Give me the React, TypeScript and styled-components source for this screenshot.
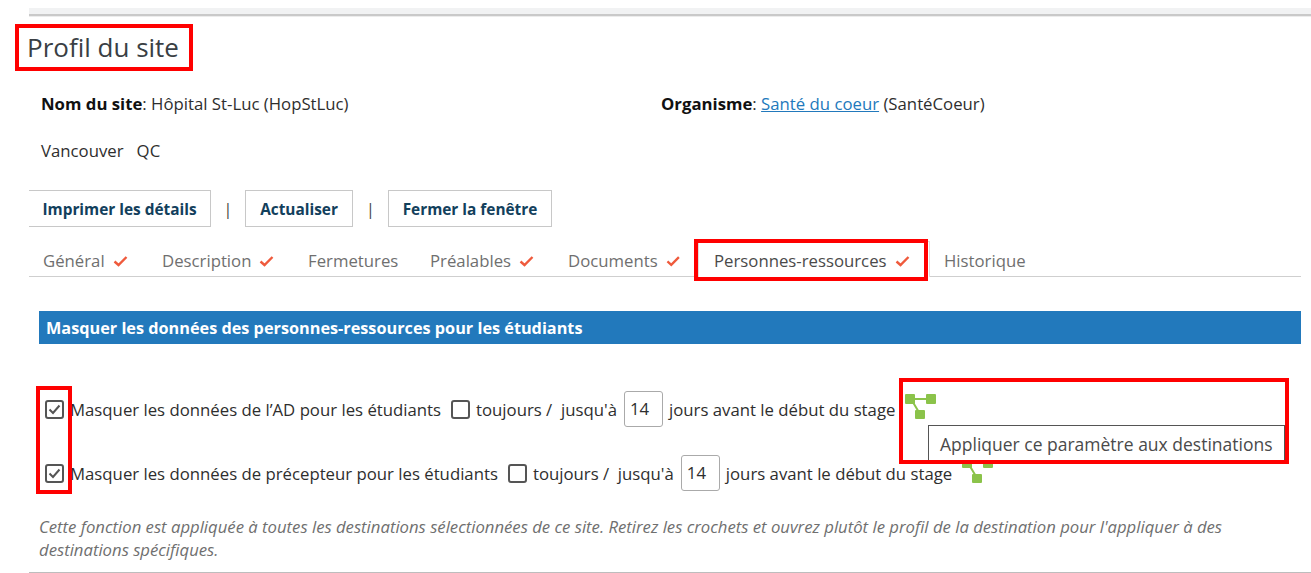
import React from "react";
import styled, { createGlobalStyle } from "styled-components";

const Global = createGlobalStyle`
  html, body { margin: 0; padding: 0; background: #fff; }
  body { font-family: "Open Sans", "Liberation Sans", sans-serif; color: #2b2b2b; }
`;

const Page = styled.div`
  position: relative;
  width: 1311px;
  height: 573px;
  overflow: hidden;
  box-sizing: border-box;
  padding: 8px 0 0 29px;
  display: flex;
  flex-direction: column;
`;
const TopBar = styled.div`
  height: 6px;
  background: #f1f2f3;
  border-bottom: 2px solid #c9c9c9;
  box-shadow: 0 1px 0 #ececec;
`;
const Title = styled.h1`
  margin: 9px 0 0 -2px;
  font-size: 26px;
  line-height: 44px;
  font-weight: 400;
  color: #3a3f44;
`;
const InfoRow = styled.div`
  display: flex;
  margin: 23px 0 0 12px;
  font-size: 16.75px;
  line-height: 24px;
  color: #2e2e2e;
`;
const InfoCell = styled.div`
  width: 620px;
  b { font-weight: 700; color: #111; }
  a { color: #2279bc; text-decoration: underline; }
`;
const City = styled.div`
  margin: 23px 0 0 12px;
  font-size: 16.75px;
  line-height: 24px;
  white-space: pre;
  color: #2e2e2e;
`;
const Actions = styled.div`
  display: flex;
  align-items: center;
  margin: 27px 0 0 0;
  height: 37px;
`;
const ActionButton = styled.button<{ $width: number; $flushLeft?: boolean }>`
  width: ${(p) => p.$width}px;
  height: 37px;
  box-sizing: border-box;
  padding: 1px 0 0 0;
  background: #fff;
  border: 1px solid #c8c8c8;
  ${(p) => (p.$flushLeft ? "border-left: 0;" : "")}
  font-family: inherit;
  font-size: 15.4px;
  font-weight: 700;
  color: #12405c;
`;
const Sep = styled.span<{ $width: number }>`
  width: ${(p) => p.$width}px;
  text-align: center;
  font-size: 16px;
  color: #444;
`;
const Tabs = styled.div`
  display: flex;
  align-items: flex-end;
  height: 37px;
  margin: 12px 10px 0 0;
  border-bottom: 1px solid #cfcfcf;
`;
const Tab = styled.div<{ $width: number }>`
  width: ${(p) => p.$width}px;
  height: 37px;
  box-sizing: border-box;
  flex: none;
  display: flex;
  align-items: center;
  gap: 8px;
  padding: 6px 0 0 14px;
  font-size: 16.75px;
  color: #6f6f6f;
  white-space: nowrap;
`;
const ActiveTab = styled(Tab)`
  height: 36px;
  margin: 0 0 -1px 18px;
  padding: 2px 0 0 15px;
  color: #4a4a4a;
  background: #fff;
  border: 1px solid #dedede;
  border-bottom: 0;
`;
const TabCheck = () => (
  <svg width="15" height="12" viewBox="0 0 15 12" fill="none">
    <path d="M1.5 6.5 L5.5 10 L13.5 2" stroke="#ef5a3c" strokeWidth="2.4" />
  </svg>
);
const SectionBar = styled.div`
  margin: 34px 10px 0 10px;
  height: 33px;
  background: #2279bc;
  color: #fff;
  font-size: 16.25px;
  font-weight: 700;
  line-height: 35px;
  padding-left: 7px;
`;
const OptionRow = styled.div<{ $top: number }>`
  display: flex;
  align-items: center;
  height: 38px;
  margin-top: ${(p) => p.$top}px;
  margin-left: 16px;
  font-size: 16.75px;
  color: #2e2e2e;
  white-space: pre;
`;
const Box = styled.span<{ $gapLeft?: number; $gapRight?: number }>`
  width: 19px;
  height: 19px;
  box-sizing: border-box;
  flex: none;
  border: 2px solid #555;
  border-radius: 3px;
  margin-left: ${(p) => p.$gapLeft ?? 0}px;
  margin-right: ${(p) => p.$gapRight ?? 0}px;
  display: flex;
  align-items: center;
  justify-content: center;
`;
const DayInput = styled.span`
  width: 39px;
  height: 36px;
  box-sizing: border-box;
  flex: none;
  border: 1px solid #aaa;
  border-radius: 3px;
  margin: 0 6px 0 7px;
  padding-left: 5px;
  line-height: 34px;
`;
const TreeIcon = styled.svg`
  flex: none;
  margin: 0 0 5px 10px;
`;
const Tree = () => (
  <TreeIcon width="31" height="25" viewBox="0 0 31 25">
    <path d="M5 5 H26 M6 5 L15 20" stroke="#8bc34a" strokeWidth="2" fill="none" />
    <rect x="0" y="0" width="10" height="10" rx="1" fill="#8bc34a" />
    <rect x="21" y="0" width="10" height="10" rx="1" fill="#8bc34a" />
    <rect x="10" y="16" width="10" height="9" rx="1" fill="#8bc34a" />
  </TreeIcon>
);
const Note = styled.p`
  margin: 23px 60px 0 10px;
  font-size: 16.69px;
  line-height: 23px;
  font-style: italic;
  color: #6f6f6f;
`;
const BottomRule = styled.div`
  position: absolute;
  left: 29px;
  right: 0;
  top: 572px;
  height: 1px;
  background: #bdbdbd;
`;
const Tooltip = styled.div`
  position: absolute;
  left: 928px;
  top: 425px;
  width: 357px;
  height: 39px;
  box-sizing: border-box;
  background: #fff;
  border: 1px solid #555;
  padding-left: 11px;
  font-size: 17.5px;
  line-height: 36px;
  color: #4a4a4a;
  white-space: nowrap;
`;
const Highlight = styled.div<{ $l: number; $t: number; $w: number; $h: number }>`
  position: absolute;
  left: ${(p) => p.$l}px;
  top: ${(p) => p.$t}px;
  width: ${(p) => p.$w}px;
  height: ${(p) => p.$h}px;
  box-sizing: border-box;
  border: 4px solid #ff0000;
`;
const Check = () => (
  <svg width="13" height="11" viewBox="0 0 13 11" fill="none">
    <path d="M1.5 5.5 L5 9 L11.5 1.5" stroke="#555" strokeWidth="2" />
  </svg>
);

const tabs: [string, number, boolean][] = [
  ["Général", 119, true],
  ["Description", 146, true],
  ["Fermetures", 122, false],
  ["Préalables", 138, true],
  ["Documents", 126, true],
];

const Option = ({ label, top }: { label: string; top: number }) => (
  <OptionRow $top={top}>
    <Box $gapRight={6}><Check /></Box>
    {label}
    <Box $gapLeft={10} $gapRight={6} />
    {"toujours /  jusqu'à"}
    <DayInput>14</DayInput>
    {"jours avant le début du stage"}
    <Tree />
  </OptionRow>
);

export default function App() {
  return (
    <Page>
      <Global />
      <TopBar />
      <Title>Profil du site</Title>
      <InfoRow>
        <InfoCell><b>Nom du site</b>: Hôpital St-Luc (HopStLuc)</InfoCell>
        <InfoCell><b>Organisme</b>: <a>Santé du coeur</a> (SantéCoeur)</InfoCell>
      </InfoRow>
      <City>{"Vancouver   QC"}</City>
      <Actions>
        <ActionButton $width={182} $flushLeft>Imprimer les détails</ActionButton>
        <Sep $width={34}>|</Sep>
        <ActionButton $width={108}>Actualiser</ActionButton>
        <Sep $width={35}>|</Sep>
        <ActionButton $width={164}>Fermer la fenêtre</ActionButton>
      </Actions>
      <Tabs>
        {tabs.map(([t, w, c]) => (
          <Tab key={t} $width={w}>{t}{c && <TabCheck />}</Tab>
        ))}
        <ActiveTab $width={232}>Personnes-ressources <TabCheck /></ActiveTab>
        <Tab $width={120}>Historique</Tab>
      </Tabs>
      <SectionBar>Masquer les données des personnes-ressources pour les étudiants</SectionBar>
      <Option top={46} label="Masquer les données de l’AD pour les étudiants" />
      <Option top={26} label="Masquer les données de précepteur pour les étudiants" />
      <Note>
        Cette fonction est appliquée à toutes les destinations sélectionnées de ce site. Retirez les crochets et ouvrez plutôt le profil de la destination pour l'appliquer à des destinations spécifiques.
      </Note>
      <BottomRule />
      <Tooltip>Appliquer ce paramètre aux destinations</Tooltip>
      <Highlight $l={15} $t={24} $w={178} $h={47} />
      <Highlight $l={694} $t={239} $w={234} $h={42} />
      <Highlight $l={36} $t={386} $w={36} $h={108} />
      <Highlight $l={899} $t={378} $w={390} $h={86} />
    </Page>
  );
}
